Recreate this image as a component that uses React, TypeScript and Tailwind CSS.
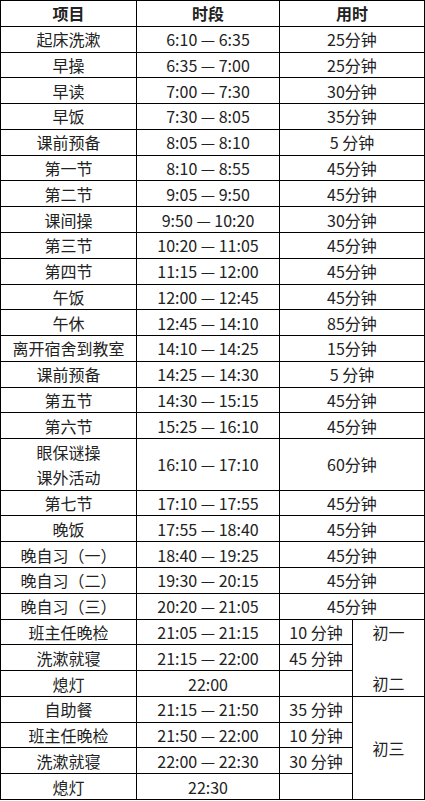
import React from 'react';

type Row = [string, string, string];

const dayRows: Row[] = [
  ['起床洗漱', '6:10 — 6:35', '25分钟'],
  ['早操', '6:35 — 7:00', '25分钟'],
  ['早读', '7:00 — 7:30', '30分钟'],
  ['早饭', '7:30 — 8:05', '35分钟'],
  ['课前预备', '8:05 — 8:10', '5 分钟'],
  ['第一节', '8:10 — 8:55', '45分钟'],
  ['第二节', '9:05 — 9:50', '45分钟'],
  ['课间操', '9:50 — 10:20', '30分钟'],
  ['第三节', '10:20 — 11:05', '45分钟'],
  ['第四节', '11:15 — 12:00', '45分钟'],
  ['午饭', '12:00 — 12:45', '45分钟'],
  ['午休', '12:45 — 14:10', '85分钟'],
  ['离开宿舍到教室', '14:10 — 14:25', '15分钟'],
  ['课前预备', '14:25 — 14:30', '5 分钟'],
  ['第五节', '14:30 — 15:15', '45分钟'],
  ['第六节', '15:25 — 16:10', '45分钟'],
];

const eveningRows: Row[] = [
  ['第七节', '17:10 — 17:55', '45分钟'],
  ['晚饭', '17:55 — 18:40', '45分钟'],
  ['晚自习（一）', '18:40 — 19:25', '45分钟'],
  ['晚自习（二）', '19:30 — 20:15', '45分钟'],
  ['晚自习（三）', '20:20 — 21:05', '45分钟'],
];

const Cell = ({ children, className = '' }: { children?: React.ReactNode; className?: string }) => (
  <div className={`bg-white flex items-center justify-center whitespace-nowrap ${className}`}>{children}</div>
);

const App = () => {
  return (
    <div
      className="w-[425px] h-[800px] bg-black p-[1px] grid gap-[1px] grid-cols-[135px_142px_72px_71px] grid-rows-[repeat(31,minmax(0,1fr))] text-[16px] leading-none text-[#222]"
      style={{ fontFamily: '"Noto Sans CJK SC", "Noto Sans", sans-serif' }}
    >
      {/* header */}
      <Cell className="font-bold">项目</Cell>
      <Cell className="font-bold">时段</Cell>
      <Cell className="col-span-2 font-bold">用时</Cell>

      {dayRows.map((r, i) => (
        <React.Fragment key={'d' + i}>
          <Cell>{r[0]}</Cell>
          <Cell>{r[1]}</Cell>
          <Cell className="col-span-2">{r[2]}</Cell>
        </React.Fragment>
      ))}

      {/* double height row */}
      <div className="row-span-2 bg-white flex flex-col">
        <div className="flex-1 flex items-center justify-center">眼保谜操</div>
        <div className="flex-1 flex items-center justify-center">课外活动</div>
      </div>
      <Cell className="row-span-2">16:10 — 17:10</Cell>
      <Cell className="row-span-2 col-span-2">60分钟</Cell>

      {eveningRows.map((r, i) => (
        <React.Fragment key={'e' + i}>
          <Cell>{r[0]}</Cell>
          <Cell>{r[1]}</Cell>
          <Cell className="col-span-2">{r[2]}</Cell>
        </React.Fragment>
      ))}

      {/* 初一 / 初二 */}
      <Cell>班主任晚检</Cell>
      <Cell>21:05 — 21:15</Cell>
      <Cell>10 分钟</Cell>
      <div className="row-span-3 bg-white flex flex-col">
        <div className="flex-1 flex items-center justify-center">初一</div>
        <div className="flex-1" />
        <div className="flex-1 flex items-center justify-center">初二</div>
      </div>
      <Cell>洗漱就寝</Cell>
      <Cell>21:15 — 22:00</Cell>
      <Cell>45 分钟</Cell>
      <Cell>熄灯</Cell>
      <Cell>22:00</Cell>
      <Cell />

      {/* 初三 */}
      <Cell>自助餐</Cell>
      <Cell>21:15 — 21:50</Cell>
      <Cell>35 分钟</Cell>
      <Cell className="row-span-4">初三</Cell>
      <Cell>班主任晚检</Cell>
      <Cell>21:50 — 22:00</Cell>
      <Cell>10 分钟</Cell>
      <Cell>洗漱就寝</Cell>
      <Cell>22:00 — 22:30</Cell>
      <Cell>30 分钟</Cell>
      <Cell>熄灯</Cell>
      <Cell>22:30</Cell>
      <Cell />
    </div>
  );
};

export default App;
